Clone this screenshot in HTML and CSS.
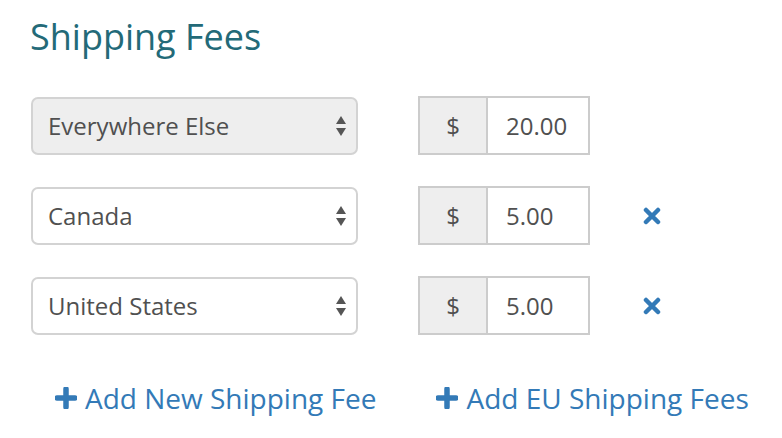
FILE: index.html
```html
<!DOCTYPE html>
<html>
<head>
<meta charset="utf-8">
<link rel="stylesheet" href="styles.css">
</head>
<body>
<div class="page">
  <h2 class="title">Shipping Fees</h2>
  <div class="rows">
    <div class="row">
      <div class="select disabled"><span>Everywhere Else</span><svg class="caret" width="10" height="22" viewBox="0 0 10 22"><path d="M5 1 L10 9 L0 9 Z M5 21 L10 13 L0 13 Z" fill="#555"/></svg></div>
      <div class="group"><span class="addon">$</span><span class="amount">20.00</span></div>
    </div>
    <div class="row">
      <div class="select"><span>Canada</span><svg class="caret" width="10" height="22" viewBox="0 0 10 22"><path d="M5 1 L10 9 L0 9 Z M5 21 L10 13 L0 13 Z" fill="#555"/></svg></div>
      <div class="group"><span class="addon">$</span><span class="amount">5.00</span></div>
      <svg class="remove" width="18" height="18" viewBox="0 0 18 18"><path d="M3 3 L15 15 M15 3 L3 15" stroke="#337ab7" stroke-width="4.5" stroke-linecap="round"/></svg>
    </div>
    <div class="row">
      <div class="select"><span>United States</span><svg class="caret" width="10" height="22" viewBox="0 0 10 22"><path d="M5 1 L10 9 L0 9 Z M5 21 L10 13 L0 13 Z" fill="#555"/></svg></div>
      <div class="group"><span class="addon">$</span><span class="amount">5.00</span></div>
      <svg class="remove" width="18" height="18" viewBox="0 0 18 18"><path d="M3 3 L15 15 M15 3 L3 15" stroke="#337ab7" stroke-width="4.5" stroke-linecap="round"/></svg>
    </div>
  </div>
  <div class="links">
    <a class="link"><svg class="plus" width="22" height="22" viewBox="0 0 22 22"><path d="M11 2 V20 M2 11 H20" stroke="#337ab7" stroke-width="5.5" stroke-linecap="round"/></svg>Add New Shipping Fee</a>
    <a class="link"><svg class="plus" width="22" height="22" viewBox="0 0 22 22"><path d="M11 2 V20 M2 11 H20" stroke="#337ab7" stroke-width="5.5" stroke-linecap="round"/></svg>Add EU Shipping Fees</a>
  </div>
</div>
</body>
</html>
```

FILE: styles.css
```css
* { box-sizing: border-box; }
html, body { margin: 0; padding: 0; background: #fff; }
body { font-family: "Open Sans", "DejaVu Sans", sans-serif; color: #555; }
.page { padding: 13px 0 0 30px; }
.title {
  margin: 0;
  font-size: 36px;
  font-weight: 400;
  color: #236a78;
  line-height: 48px;
}
.rows {
  margin-top: 35px;
  display: flex;
  flex-direction: column;
  gap: 31px;
}
.row {
  display: flex;
  align-items: center;
  height: 59px;
}
.select {
  width: 327px;
  height: 58px;
  border: 2px solid #d3d3d3;
  border-radius: 7px;
  background: #fff;
  display: flex;
  align-items: center;
  justify-content: space-between;
  padding: 0 10px 0 15px;
  font-size: 24px;
  color: #505050;
  margin-left: 1px;
}
.select.disabled { background: #eee; }
.caret { display: block; }
.group {
  margin-left: 60px;
  display: flex;
  height: 59px;
  border: 2px solid #ccc;
  width: 172px;
}
.addon {
  width: 68px;
  background: #eee;
  border-right: 2px solid #ccc;
  display: flex;
  align-items: center;
  justify-content: center;
  font-size: 24px;
  color: #505050;
}
.amount {
  flex: 1;
  display: flex;
  align-items: center;
  padding-left: 18px;
  font-size: 24px;
  color: #505050;
}
.remove { margin-left: 53px; display: block; }
.links {
  margin-top: 45px;
  display: flex;
  padding-left: 25px;
  gap: 60px;
}
.link {
  color: #337ab7;
  font-size: 28px;
  display: flex;
  align-items: center;
  gap: 8px;
  text-decoration: none;
  line-height: 36px;
}
.plus { display: block; }
```
